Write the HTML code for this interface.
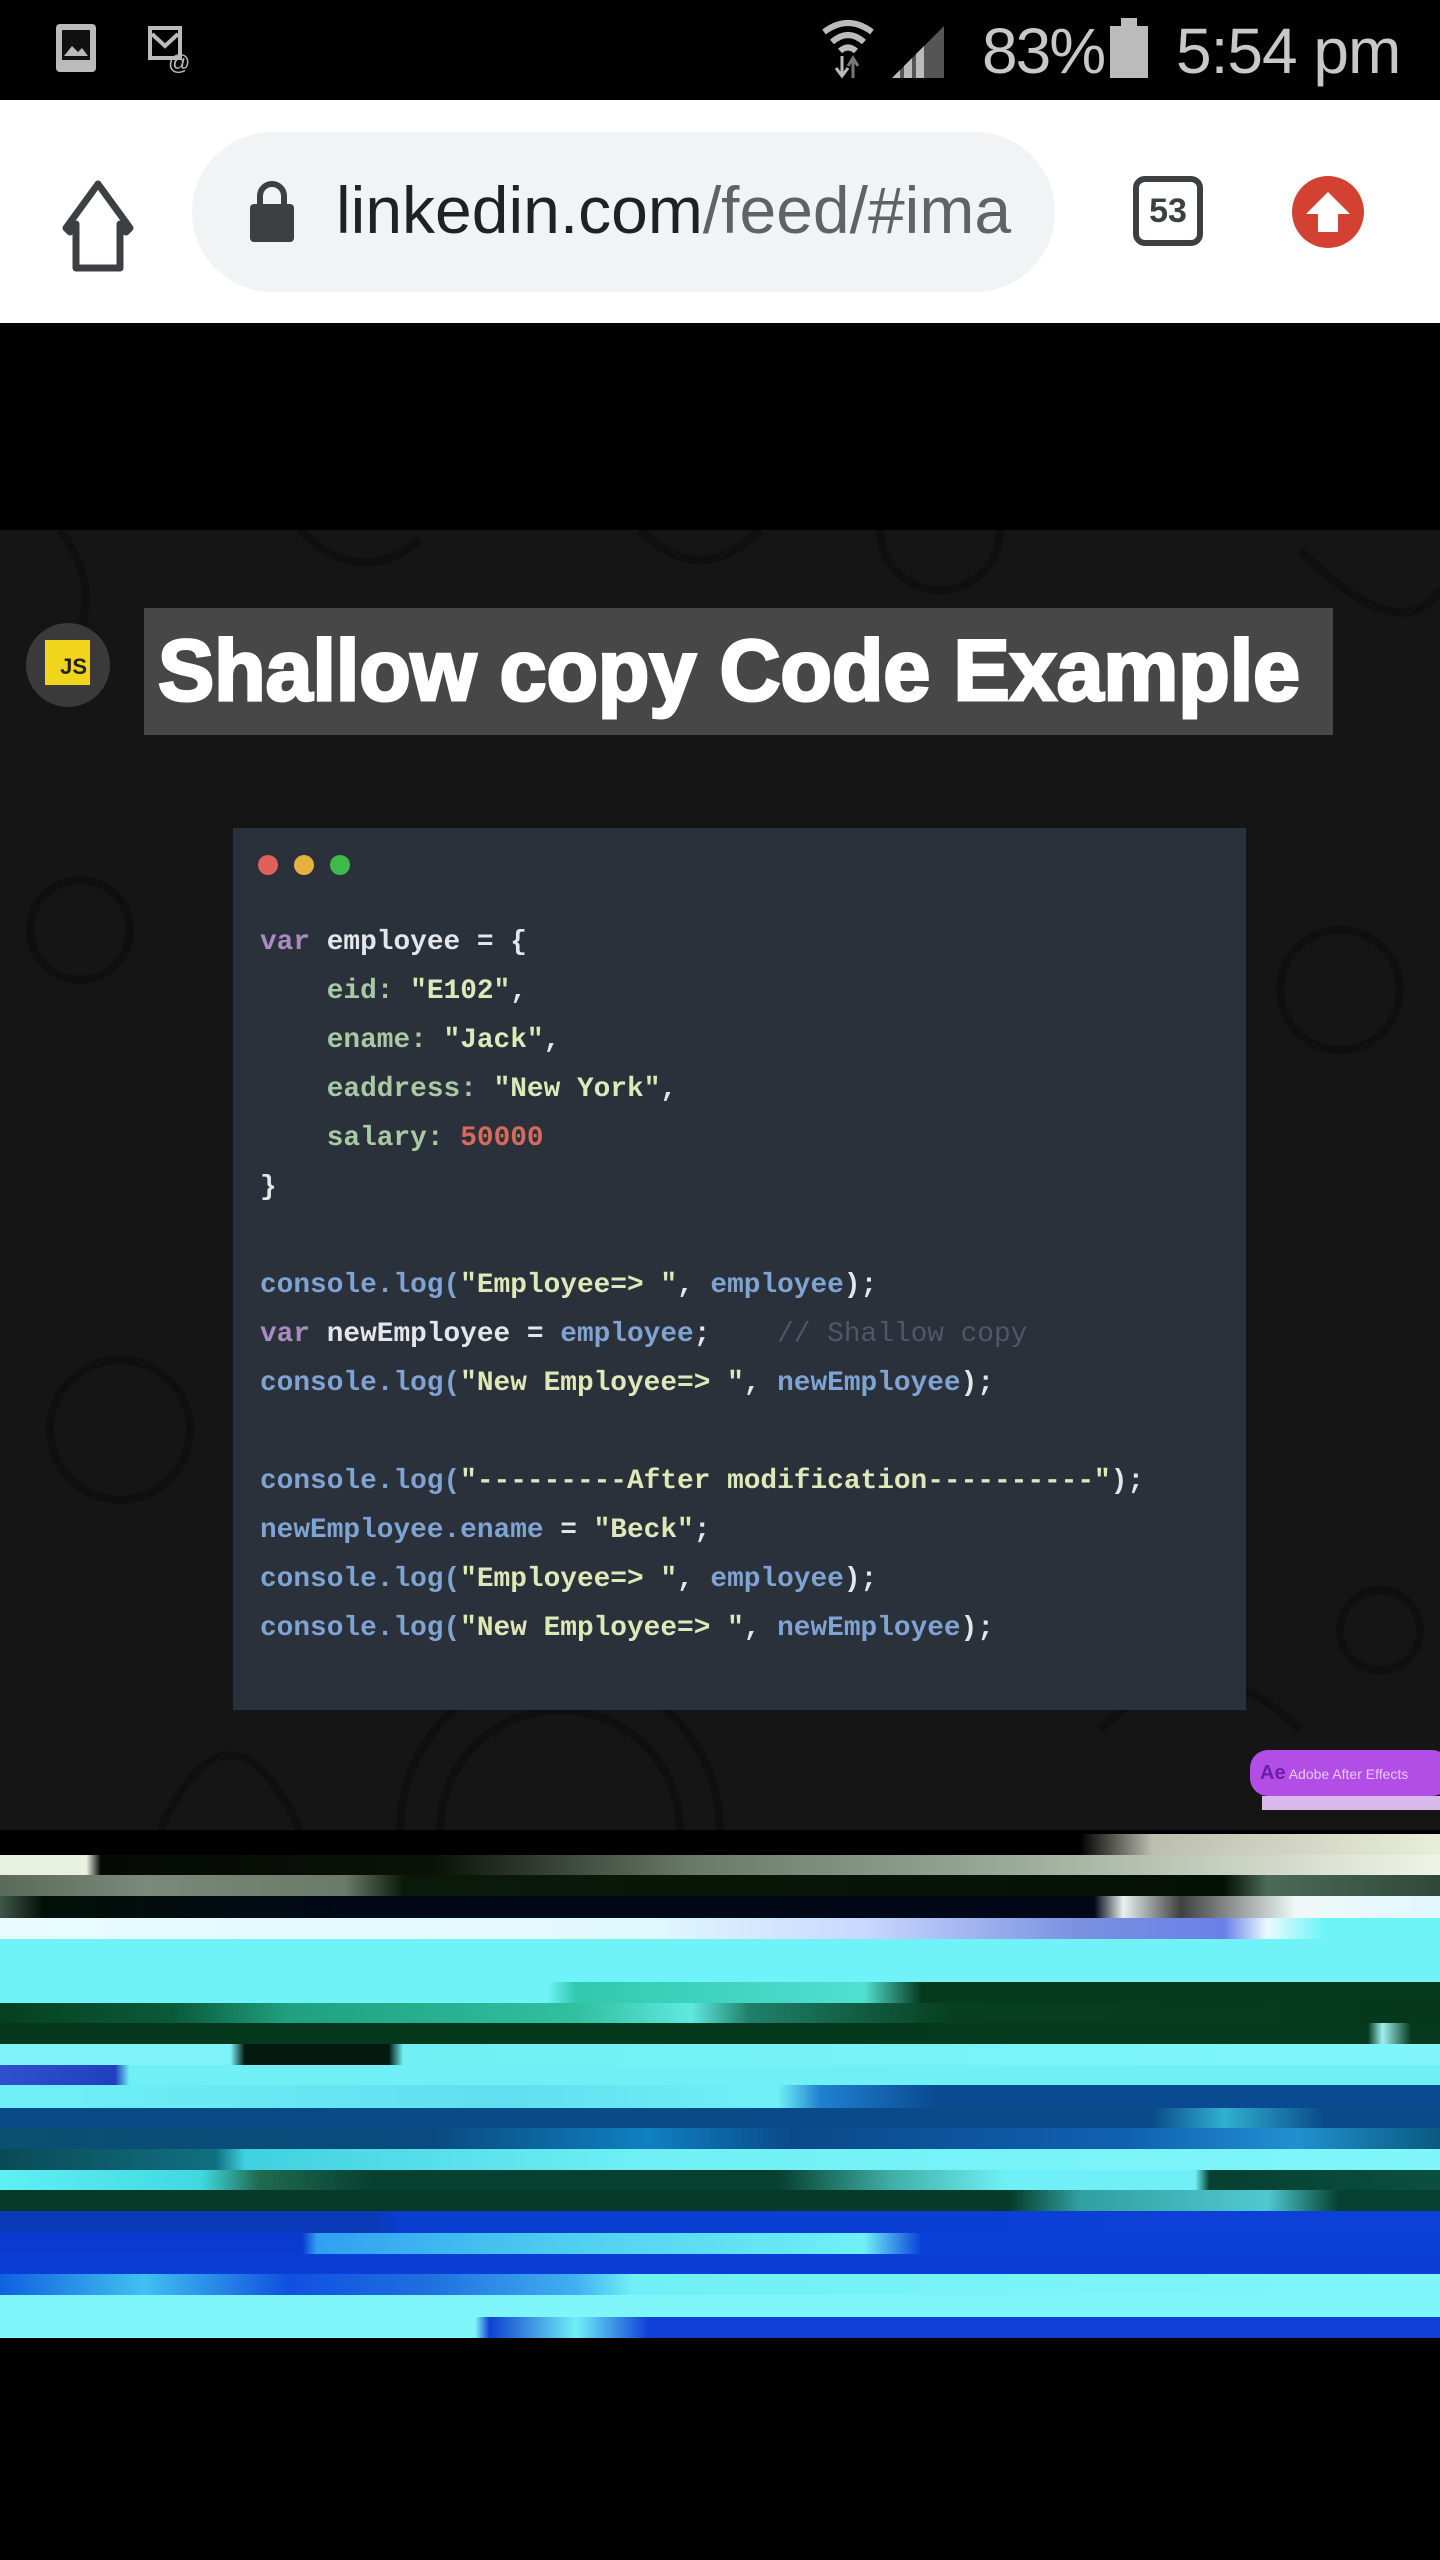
<!DOCTYPE html>
<html><head><meta charset="utf-8"><style>
*{margin:0;padding:0;box-sizing:border-box}
body{width:1440px;height:2560px;background:#000;position:relative;overflow:hidden;font-family:"Liberation Sans",sans-serif}
.a{position:absolute}
.code{position:absolute;left:260px;top:918px;font-family:"Liberation Mono",monospace;font-size:27.8px;line-height:49px;font-weight:bold;white-space:pre;color:#e4e6ea}
.k{color:#a98bc1}.p{color:#a9c9a4}.s{color:#dfe8b8}.n{color:#d9695f}.f{color:#7fa3d2}.c{color:#4e5866;font-weight:normal}
.band{position:absolute;left:0;width:1440px}
</style></head><body>
<!-- status bar -->
<div class="a" style="left:0;top:0;width:1440px;height:100px;background:#000"></div>
<svg class="a" style="left:50px;top:20px" width="160" height="60" viewBox="0 0 160 60">
<rect x="6" y="4" width="40" height="48" rx="4" fill="#bbb"/><rect x="12" y="10" width="28" height="30" fill="#111"/><path d="M14 36 L22 26 L28 32 L32 28 L38 36Z" fill="#bbb"/>
<rect x="100" y="8" width="30" height="30" fill="none" stroke="#bbb" stroke-width="4"/><path d="M102 14 L115 26 L128 14" stroke="#bbb" stroke-width="4" fill="none"/><text x="118" y="50" font-size="22" fill="#bbb" font-family="Liberation Sans">@</text>
</svg>
<svg class="a" style="left:820px;top:18px" width="140" height="64" viewBox="0 0 140 64">
<path d="M4 14 Q28 -4 52 14" stroke="#bbb" stroke-width="6" fill="none"/><path d="M12 24 Q28 10 44 24" stroke="#bbb" stroke-width="6" fill="none"/><path d="M20 33 Q28 26 36 33" stroke="#bbb" stroke-width="6" fill="none"/>
<path d="M22 38 V56 M16 50 L22 58 L28 50" stroke="#bbb" stroke-width="3" fill="none"/><path d="M33 60 V42 M28 48 L33 40 L38 48" stroke="#777" stroke-width="3" fill="none"/>
<path d="M72 60 L124 8 V60Z" fill="#555"/><path d="M72 60 L80 52 V60Z M84 48 L92 40 V60 H84Z M96 36 L104 28 V60 H96Z" fill="#bbb"/>
</svg>
<div class="a" style="left:982px;top:14px;font-size:64px;color:#c8c8c8;letter-spacing:-2px">83%</div>
<div class="a" style="left:1121px;top:18px;width:16px;height:8px;background:#bbb"></div>
<div class="a" style="left:1110px;top:26px;width:38px;height:52px;background:#bbb"></div>
<div class="a" style="left:1176px;top:14px;font-size:64px;color:#c8c8c8;letter-spacing:-1px">5:54 pm</div>
<!-- address bar -->
<div class="a" style="left:0;top:100px;width:1440px;height:223px;background:#fff"></div>
<svg class="a" style="left:56px;top:172px" width="84" height="104" viewBox="0 0 84 104"><path d="M10 56 L42 12 L74 56 L70 60 L64 52 V96 H20 V52 L14 60Z" fill="none" stroke="#3c4043" stroke-width="7" stroke-linejoin="round"/></svg>
<div class="a" style="left:192px;top:132px;width:863px;height:160px;border-radius:80px;background:#f1f3f4"></div>
<svg class="a" style="left:246px;top:178px" width="52" height="66" viewBox="0 0 52 66"><path d="M14 28 V18 A12 12 0 0 1 38 18 V28" stroke="#3c4043" stroke-width="6" fill="none"/><rect x="4" y="26" width="44" height="38" rx="4" fill="#3c4043"/></svg>
<div class="a" style="left:336px;top:172px;font-size:66px;color:#202124;white-space:nowrap">linkedin.com<span style="color:#5f6368">/feed/#ima</span></div>
<div class="a" style="left:1133px;top:176px;width:70px;height:70px;border:6px solid #3c4043;border-radius:12px;font-weight:bold;font-size:34px;color:#3c4043;text-align:center;line-height:58px">53</div>
<svg class="a" style="left:1290px;top:174px" width="76" height="76" viewBox="0 0 76 76"><circle cx="38" cy="38" r="36" fill="#d34133"/><path d="M38 18 L60 40 H48 V58 H28 V40 H16Z" fill="#fff"/></svg>
<!-- image -->
<div class="a" style="left:0;top:530px;width:1440px;height:1300px;background:#151515"></div>
<svg class="a" style="left:0;top:530px;opacity:.35" width="1440" height="1300" viewBox="0 0 1440 1300" fill="none" stroke="#050505" stroke-width="8">
<path d="M60 0 Q120 80 40 160 M300 0 Q360 60 420 10 M640 0 Q700 60 760 0 M880 0 A60 60 0 0 0 1000 0 M1300 20 Q1400 120 1440 60"/>
<circle cx="80" cy="400" r="50"/><circle cx="1340" cy="460" r="60"/><circle cx="1380" cy="1100" r="40"/><circle cx="120" cy="900" r="70"/>
<path d="M400 1300 A160 160 0 0 1 720 1300 M440 1300 A120 120 0 0 1 680 1300 M160 1300 Q230 1150 300 1300 M1100 1200 Q1200 1100 1300 1200"/>
</svg>
<div class="a" style="left:26px;top:623px;width:84px;height:84px;border-radius:50%;background:#3a3a3a"></div>
<div class="a" style="left:45px;top:640px;width:45px;height:45px;background:#f0d51c;font-weight:bold;font-size:22px;color:#222;text-align:right;padding:14px 3px 0 0;line-height:26px">JS</div>
<div class="a" style="left:144px;top:608px;width:1189px;height:127px;background:#474747"></div>
<svg class="a" style="left:144px;top:608px" width="1189" height="127"><text x="14" y="92" font-family="Liberation Sans" font-weight="bold" font-size="86" fill="#fff" stroke="#fff" stroke-width="3" textLength="1142" lengthAdjust="spacingAndGlyphs">Shallow copy Code Example</text></svg>
<div class="a" style="left:233px;top:828px;width:1013px;height:882px;background:#2b313a"></div>
<div class="a" style="left:258px;top:855px;width:20px;height:20px;border-radius:50%;background:#e0605a"></div>
<div class="a" style="left:294px;top:855px;width:20px;height:20px;border-radius:50%;background:#e6b13e"></div>
<div class="a" style="left:330px;top:855px;width:20px;height:20px;border-radius:50%;background:#3fba4a"></div>
<div class="code"><span class="k">var</span> employee = {
    <span class="p">eid:</span> <span class="s">"E102"</span>,
    <span class="p">ename:</span> <span class="s">"Jack"</span>,
    <span class="p">eaddress:</span> <span class="s">"New York"</span>,
    <span class="p">salary:</span> <span class="n">50000</span>
}

<span class="f">console.log(</span><span class="s">"Employee=&gt; "</span>, <span class="f">employee</span>);
<span class="k">var</span> newEmployee = <span class="f">employee</span>;    <span class="c">// Shallow copy</span>
<span class="f">console.log(</span><span class="s">"New Employee=&gt; "</span>, <span class="f">newEmployee</span>);

<span class="f">console.log(</span><span class="s">"---------After modification----------"</span>);
<span class="f">newEmployee.ename</span> = <span class="s">"Beck"</span>;
<span class="f">console.log(</span><span class="s">"Employee=&gt; "</span>, <span class="f">employee</span>);
<span class="f">console.log(</span><span class="s">"New Employee=&gt; "</span>, <span class="f">newEmployee</span>);</div>
<div class="a" style="left:1250px;top:1750px;width:200px;height:46px;border-radius:18px;background:#b24ee6;font-size:14px;color:#e6c8ff;padding:12px 0 0 10px"><b style="color:#6a1fa8;font-size:20px">Ae</b> Adobe After Effects</div>
<div class="a" style="left:1262px;top:1796px;width:178px;height:14px;background:#d9b8ec"></div>
<!-- glitch bands -->
<div class="band" style="top:1834px;height:21px;background:linear-gradient(90deg,#000 0,#000 75%,#bdbdb0 80%,#e8eed8 100%)"></div>
<div class="band" style="top:1855px;height:20px;background:linear-gradient(90deg,#e8f0e0 0,#e8f0e0 6%,#050a05 7%,#0a1208 30%,#6a7a6a 48%,#9aaa98 70%,#c8d0c0 85%,#f0f4e8 100%)"></div>
<div class="band" style="top:1875px;height:21px;background:linear-gradient(90deg,#5a6a5a 0,#7a8a7a 10%,#6a7a68 24%,#0a1a0a 28%,#051005 85%,#4a6a5a 88%,#304838 100%)"></div>
<div class="band" style="top:1896px;height:22px;background:linear-gradient(90deg,#405848 0,#031008 3%,#020818 25%,#030818 76%,#e8f0f0 78%,#404040 82%,#f0f8f8 90%,#e0f8ff 100%)"></div>
<div class="band" style="top:1918px;height:21px;background:linear-gradient(90deg,#e8fcff 0,#e0f8ff 45%,#c8d8ff 60%,#7a90e0 75%,#6a80e8 85%,#e8fbff 88%,#6cf4f8 92%,#6cf4f8 100%)"></div>
<div class="band" style="top:1939px;height:43px;background:#6ff3f8"></div>
<div class="band" style="top:1982px;height:21px;background:linear-gradient(90deg,#6ff3f8 0,#6ff3f8 38%,#30c8b0 40%,#50e0d0 60%,#063a1e 64%,#063a1e 100%)"></div>
<div class="band" style="top:2003px;height:20px;background:linear-gradient(90deg,#064020 0,#0a5a3a 12%,#20a080 20%,#30c0a0 40%,#60e8e0 48%,#20806a 52%,#064020 66%,#05381c 100%)"></div>
<div class="band" style="top:2023px;height:21px;background:linear-gradient(90deg,#05381c 0,#053a1e 95%,#a0f0f0 96%,#053a1e 98%)"></div>
<div class="band" style="top:2044px;height:21px;background:linear-gradient(90deg,#7ef4f8 0,#7ef4f8 16%,#041a10 17%,#041a10 27%,#70f0f4 28%,#80f6fa 100%)"></div>
<div class="band" style="top:2065px;height:20px;background:linear-gradient(90deg,#3050d0 0,#2040c0 8%,#70f0f6 9%,#70f0f6 100%)"></div>
<div class="band" style="top:2085px;height:23px;background:linear-gradient(90deg,#70f0f6 0,#60e0f0 35%,#70f0f6 54%,#2080d0 57%,#0a4a90 65%,#0a4a90 100%)"></div>
<div class="band" style="top:2108px;height:20px;background:linear-gradient(90deg,#084a88 0,#0a4a8a 80%,#30b0d0 85%,#0a4a8a 92%)"></div>
<div class="band" style="top:2128px;height:21px;background:linear-gradient(90deg,#0a5070 0,#0a4a80 30%,#1080c0 45%,#0a4a8a 55%,#1060b0 78%,#2090d0 90%,#0a5a80 100%)"></div>
<div class="band" style="top:2149px;height:21px;background:linear-gradient(90deg,#0a4a58 0,#107080 15%,#40d0e0 17%,#70f0f6 45%,#80f6fa 100%)"></div>
<div class="band" style="top:2170px;height:20px;background:linear-gradient(90deg,#60f0f4 0,#40d8e0 14%,#206a50 18%,#064030 26%,#064030 54%,#40b0a8 62%,#70f0f6 70%,#70f0f6 83%,#064030 84%,#0a5040 100%)"></div>
<div class="band" style="top:2190px;height:21px;background:linear-gradient(90deg,#053a28 0,#053a28 70%,#30a0a0 75%,#50c8d0 88%,#054030 93%)"></div>
<div class="band" style="top:2211px;height:22px;background:linear-gradient(90deg,#0a3ab8 0,#0a3ab8 26%,#0a3ed0 28%,#0c40d8 100%)"></div>
<div class="band" style="top:2233px;height:21px;background:linear-gradient(90deg,#0a3ad0 0,#0a3ad0 21%,#30a0f0 22%,#50d0f0 40%,#70f0f6 60%,#0a40d8 64%,#0a40d8 100%)"></div>
<div class="band" style="top:2254px;height:20px;background:#0a3ed6"></div>
<div class="band" style="top:2274px;height:21px;background:linear-gradient(90deg,#1060e0 0,#40c0f0 10%,#1050e0 20%,#2070e0 30%,#40b0f0 40%,#70f0f6 44%,#80f6fa 100%)"></div>
<div class="band" style="top:2295px;height:22px;background:#7ef6fa"></div>
<div class="band" style="top:2317px;height:21px;background:linear-gradient(90deg,#7ef6fa 0,#7ef6fa 33%,#1040d0 34%,#70f0f6 40%,#1040d8 45%,#1040d8 100%)"></div>
</body></html>
